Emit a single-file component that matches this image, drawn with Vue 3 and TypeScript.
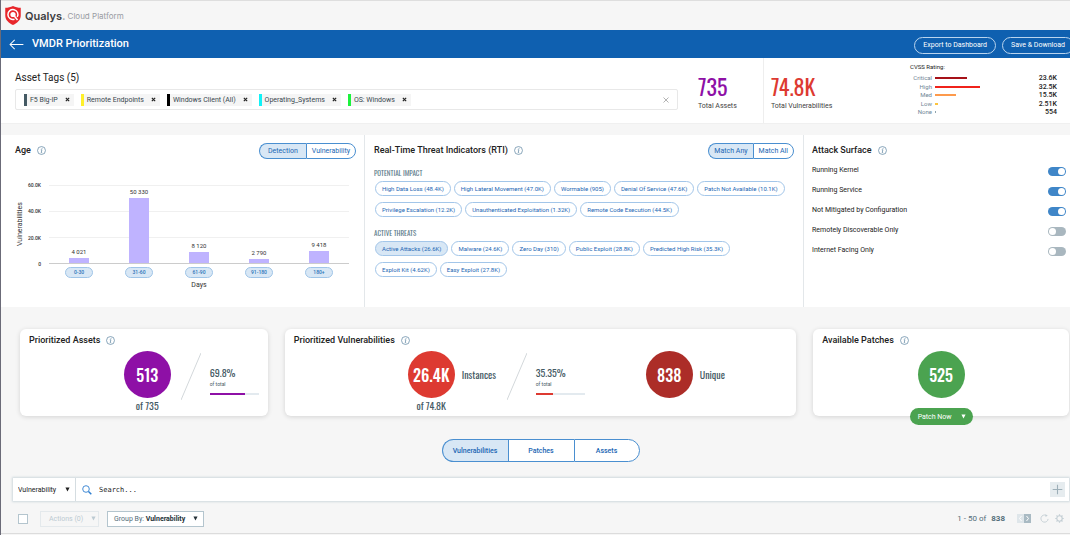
<script setup lang="ts">
import { ref } from 'vue'

interface Tag { name: string; color: string }
interface Rating { label: string; width: number; color: string; value: string }
interface AgeBucket { range: string; label: string; count: number }

const tags = ref<Tag[]>([
  { name: 'F5 Big-IP', color: '#455a64' },
  { name: 'Remote Endpoints', color: '#fff02a' },
  { name: 'Windows Client (All)', color: '#000000' },
  { name: 'Operating_Systems', color: '#12f2f7' },
  { name: 'OS: Windows', color: '#1cf23c' },
])

const ratings: Rating[] = [
  { label: 'Critical', width: 32, color: '#a61219', value: '23.6K' },
  { label: 'High', width: 45, color: '#f0231b', value: '32.5K' },
  { label: 'Med', width: 21, color: '#fd9a4c', value: '15.5K' },
  { label: 'Low', width: 3, color: '#fcc43e', value: '2.51K' },
  { label: 'None', width: 1, color: '#90a4ae', value: '554' },
]

const axisMax = 60000
const axisTicks = ['60.0K', '40.0K', '20.0K', '0']
const ages: AgeBucket[] = [
  { range: '0-30', label: '4 021', count: 4021 },
  { range: '31-60', label: '50 330', count: 50330 },
  { range: '61-90', label: '8 120', count: 8120 },
  { range: '91-180', label: '2 790', count: 2790 },
  { range: '180+', label: '9 418', count: 9418 },
]
const ageMode = ref('Detection')
const matchMode = ref('Match Any')

const impacts = [
  'High Data Loss (48.4K)', 'High Lateral Movement (47.0K)', 'Wormable (905)',
  'Denial Of Service (47.6K)', 'Patch Not Available (10.1K)', 'Privilege Escalation (12.2K)',
  'Unauthenticated Exploitation (1.32K)', 'Remote Code Execution (44.5K)',
]
const threats = [
  'Active Attacks (26.6K)', 'Malware (24.6K)', 'Zero Day (310)', 'Public Exploit (28.8K)',
  'Predicted High Risk (35.3K)', 'Exploit Kit (4.62K)', 'Easy Exploit (27.8K)',
]
const selected = ref<string[]>(['Active Attacks (26.6K)'])
function toggleChip(name: string) {
  selected.value = selected.value.includes(name)
    ? selected.value.filter((n) => n !== name)
    : [...selected.value, name]
}

const surfaces = ref([
  { name: 'Running Kernel', on: true },
  { name: 'Running Service', on: true },
  { name: 'Not Mitigated by Configuration', on: true },
  { name: 'Remotely Discoverable Only', on: false },
  { name: 'Internet Facing Only', on: false },
])

const tabs = ['Vulnerabilities', 'Patches', 'Assets']
const tab = ref('Vulnerabilities')
const query = ref('')
</script>

<template>
  <div class="page">
    <header class="brand">
      <svg class="shield" viewBox="0 0 32 38" aria-hidden="true">
        <path d="M16 0C11 2.500 6 3.600 0.500 3.600V19C0.500 28 7 33.500 16 38C25 33.500 31.500 28 31.500 19V3.600C26 3.600 21 2.500 16 0Z" fill="#e8262b" />
        <path d="M19 26.500A10 10 0 1 1 24.500 22" fill="none" stroke="#fff" stroke-width="3" />
        <circle cx="16" cy="17" r="5.200" fill="#fff" />
        <path d="M17 18L25 28" stroke="#fff" stroke-width="3" />
      </svg>
      <span class="logo">Qualys<i>.</i></span>
      <span class="product">Cloud Platform</span>
    </header>

    <div class="titlebar">
      <a href="#" class="back" aria-label="Back">
        <svg viewBox="0 0 16 12"><path d="M15.500 6H1M6 1L1 6L6 11" fill="none" stroke="currentColor" stroke-width="1.100" /></svg>
      </a>
      <h1>VMDR Prioritization</h1>
      <div class="title-actions">
        <button type="button">Export to Dashboard</button>
        <button type="button">Save &amp; Download</button>
      </div>
    </div>

    <section class="summary">
      <div class="tags">
        <h2>Asset Tags (5)</h2>
        <div class="tagbox">
          <span v-for="t in tags" :key="t.name" class="tag">
            <span class="swatch" :style="{ background: t.color }"></span>
            <span class="tagname">{{ t.name }}</span>
            <button type="button" :aria-label="'Remove ' + t.name">
              <svg viewBox="0 0 6 6"><path d="M1 1L5 5M5 1L1 5" stroke="#222" stroke-width="1.400" /></svg>
            </button>
          </span>
          <button type="button" class="clear" aria-label="Clear all">
            <svg viewBox="0 0 6 6"><path d="M0.500 0.500L5.500 5.500M5.500 0.500L0.500 5.500" stroke="#aaa" stroke-width="0.900" /></svg>
          </button>
        </div>
      </div>
      <div class="stat assets"><strong>735</strong><span>Total Assets</span></div>
      <div class="stat vulns"><strong>74.8K</strong><span>Total Vulnerabilities</span></div>
      <div class="cvss">
        <h3>CVSS Rating:</h3>
        <div class="ratings">
          <div v-for="r in ratings" :key="r.label" class="rating">
            <span class="rlabel">{{ r.label }}</span>
            <span class="rbar" :style="{ width: r.width + 'px', background: r.color }"></span>
            <span class="rvalue">{{ r.value }}</span>
          </div>
        </div>
      </div>
    </section>

    <div class="panels">
      <section class="panel">
        <div class="head">
          <h2>Age</h2>
          <svg class="info" viewBox="0 0 10 10"><circle cx="5" cy="5" r="4.400" /><path d="M5.700 2.100L5.500 3.100M4.200 4.200H5.400L4.700 7.400H5.700" /></svg>
          <div class="segmented">
            <button v-for="m in ['Detection', 'Vulnerability']" :key="m" type="button" :class="{ on: ageMode === m }" @click="ageMode = m">{{ m }}</button>
          </div>
        </div>
        <div class="chart">
          <div class="ytitle">Vulnerabilities</div>
          <div class="yaxis"><span v-for="t in axisTicks" :key="t">{{ t }}</span></div>
          <div class="plot">
            <div class="gridlines"><i></i><i></i><i></i></div>
            <div class="bars">
              <div v-for="a in ages" :key="a.range" class="col">
                <span>{{ a.label }}</span>
                <div class="bar" :style="{ height: (a.count / axisMax) * 100 + '%' }"></div>
              </div>
            </div>
          </div>
          <div class="xaxis">
            <div v-for="a in ages" :key="a.range"><button type="button">{{ a.range }}</button></div>
          </div>
          <div class="xtitle">Days</div>
        </div>
      </section>

      <section class="panel rti">
        <div class="head">
          <h2>Real-Time Threat Indicators (RTI)</h2>
          <svg class="info" viewBox="0 0 10 10"><circle cx="5" cy="5" r="4.400" /><path d="M5.700 2.100L5.500 3.100M4.200 4.200H5.400L4.700 7.400H5.700" /></svg>
          <div class="segmented">
            <button v-for="m in ['Match Any', 'Match All']" :key="m" type="button" :class="{ on: matchMode === m }" @click="matchMode = m">{{ m }}</button>
          </div>
        </div>
        <h4>POTENTIAL IMPACT</h4>
        <div class="chips">
          <button v-for="c in impacts" :key="c" type="button" :class="{ on: selected.includes(c) }" @click="toggleChip(c)">{{ c }}</button>
        </div>
        <h4>ACTIVE THREATS</h4>
        <div class="chips">
          <button v-for="c in threats" :key="c" type="button" :class="{ on: selected.includes(c) }" @click="toggleChip(c)">{{ c }}</button>
        </div>
      </section>

      <section class="panel attack">
        <div class="head">
          <h2>Attack Surface</h2>
          <svg class="info" viewBox="0 0 10 10"><circle cx="5" cy="5" r="4.400" /><path d="M5.700 2.100L5.500 3.100M4.200 4.200H5.400L4.700 7.400H5.700" /></svg>
        </div>
        <label v-for="s in surfaces" :key="s.name" class="switch">
          <span>{{ s.name }}</span>
          <input v-model="s.on" type="checkbox" />
        </label>
      </section>
    </div>

    <div class="cards">
      <section class="card">
        <div class="head">
          <h2>Prioritized Assets</h2>
          <svg class="info" viewBox="0 0 10 10"><circle cx="5" cy="5" r="4.400" /><path d="M5.700 2.100L5.500 3.100M4.200 4.200H5.400L4.700 7.400H5.700" /></svg>
        </div>
        <div class="figures end">
          <div class="total"><div class="disc purple">513</div><span>of 735</span></div>
          <svg class="slash" viewBox="0 0 20 47"><path d="M0 47L20 0" stroke="#d3d8db" /></svg>
          <div class="share">
            <strong>69.8%</strong><small>of total</small>
            <div class="track"><div class="fill purple" :style="{ width: '71%' }"></div></div>
          </div>
        </div>
      </section>

      <section class="card">
        <div class="head">
          <h2>Prioritized Vulnerabilities</h2>
          <svg class="info" viewBox="0 0 10 10"><circle cx="5" cy="5" r="4.400" /><path d="M5.700 2.100L5.500 3.100M4.200 4.200H5.400L4.700 7.400H5.700" /></svg>
        </div>
        <div class="figures wide">
          <div class="total"><div class="disc red">26.4K</div><span>of 74.8K</span></div>
          <span class="caption">Instances</span>
          <svg class="slash" viewBox="0 0 20 47"><path d="M0 47L20 0" stroke="#d3d8db" /></svg>
          <div class="share">
            <strong>35.35%</strong><small>of total</small>
            <div class="track"><div class="fill red" :style="{ width: '35%' }"></div></div>
          </div>
          <div class="disc crimson">838</div>
          <span class="caption">Unique</span>
        </div>
      </section>

      <section class="card patches">
        <div class="head">
          <h2>Available Patches</h2>
          <svg class="info" viewBox="0 0 10 10"><circle cx="5" cy="5" r="4.400" /><path d="M5.700 2.100L5.500 3.100M4.200 4.200H5.400L4.700 7.400H5.700" /></svg>
        </div>
        <div class="disc green">525</div>
        <button type="button" class="patch">Patch Now <svg class="caret" viewBox="0 0 6 6"><path d="M0.500 0.500H5.500L3 5.500Z" fill="currentColor" /></svg></button>
      </section>
    </div>

    <nav class="tabs">
      <button v-for="t in tabs" :key="t" type="button" :class="{ on: tab === t }" @click="tab = t">{{ t }}</button>
    </nav>

    <div class="search">
      <label class="scope">
        <select aria-label="Search scope"><option>Vulnerability</option><option>Asset</option></select>
        <svg class="caret" viewBox="0 0 6 6"><path d="M0.500 0.500H5.500L3 5.500Z" fill="currentColor" /></svg>
      </label>
      <svg class="lens" viewBox="0 0 10 10"><circle cx="4" cy="4" r="3.300" fill="none" stroke="#2f7fd0" stroke-width="0.900" /><path d="M6.500 6.500L9.300 9.300" stroke="#2f7fd0" stroke-width="1.500" /></svg>
      <input v-model="query" type="text" placeholder="Search..." aria-label="Search" />
      <button type="button" class="add" aria-label="Add filter">
        <svg viewBox="0 0 14 14"><path d="M7 2.500V11.500M2.500 7H11.500" stroke="#9dafb8" /></svg>
      </button>
    </div>

    <div class="toolbar">
      <input type="checkbox" aria-label="Select all" />
      <button type="button" class="actions" disabled>Actions (0) <svg class="caret" viewBox="0 0 6 6"><path d="M0.500 0.500H5.500L3 5.500Z" fill="currentColor" /></svg></button>
      <button type="button" class="group"><span>Group By: <b>Vulnerability</b></span> <svg class="caret" viewBox="0 0 6 6"><path d="M0.500 0.500H5.500L3 5.500Z" fill="currentColor" /></svg></button>
      <span class="count">1 - 50 of <b>838</b></span>
      <div class="pager">
        <button type="button" aria-label="Previous page"><svg viewBox="0 0 7 9"><path d="M4.500 2L2.500 4.500L4.500 7" fill="none" stroke="#fff" /></svg></button>
        <button type="button" aria-label="Next page"><svg viewBox="0 0 7 9"><path d="M2.500 2L4.500 4.500L2.500 7" fill="none" stroke="#fff" /></svg></button>
      </div>
      <button type="button" class="tool" aria-label="Refresh">
        <svg viewBox="0 0 10 10"><path d="M6.800 1.500A4 4 0 1 0 9 5.500" fill="none" stroke="#c3ced4" /><path d="M6 0.300L8.600 1.800L6.200 3.200Z" fill="#c3ced4" /></svg>
      </button>
      <button type="button" class="tool" aria-label="Settings">
        <svg viewBox="0 0 10 10"><circle cx="5" cy="5" r="3" fill="none" stroke="#c3ced4" stroke-width="1.200" /><path d="M5 0.300V2M5 8V9.700M0.300 5H2M8 5H9.700M1.700 1.700L2.900 2.900M7.100 7.100L8.300 8.300M1.700 8.300L2.900 7.100M7.100 2.900L8.300 1.700" stroke="#c3ced4" stroke-width="1.300" /></svg>
      </button>
    </div>
  </div>
</template>

<style>
body { margin: 0; background: #f6f6f6; }
</style>

<style scoped>
.page {
  --narrow: Oswald, "Roboto Condensed", "Liberation Sans Narrow", "Liberation Sans", sans-serif;
  border-left: 1px solid #6b6b78;
  background: #f6f6f6;
  color: #212121;
  font: 7px/10px Roboto, "Liberation Sans", sans-serif;
  min-height: 100vh;
  box-sizing: border-box;
  overflow: hidden;
}
.page *, .page *::before { box-sizing: border-box; }
h1, h2, h3, h4 { margin: 0; font-weight: 500; }
button { font: inherit; color: inherit; background: none; border: 0; padding: 0; cursor: pointer; white-space: nowrap; }
svg { display: block; }
.caret { width: 5px; height: 5px; }

.brand { display: flex; align-items: center; height: 30px; padding-left: 4px; border-top: 1px solid #dedede; }
.shield { width: 16px; height: 19px; }
.logo { margin-left: 4px; font: 600 11px/16px Inter, sans-serif; color: #3c3c40; }
.logo i { color: #aaa; font-style: normal; }
.product { margin-left: 2px; font: 8px/12px Inter, sans-serif; color: #999ca3; }

.titlebar { display: flex; align-items: center; height: 28px; padding-left: 8px; background: #0f60b0; color: #fff; }
.back { color: #fff; width: 15px; }
.back svg { width: 15px; height: 11px; }
h1 { margin-left: 8px; font-size: 11px; line-height: 14px; }
.title-actions { display: flex; gap: 6px; margin-left: auto; margin-right: -4px; padding-top: 2px; }
.title-actions button { height: 17px; padding: 0 8px; border: 1px solid #b9d4ee; border-radius: 9px; }

.summary { display: flex; height: 66px; background: #fff; padding-left: 14px; border-bottom: 1px solid #f0f0f0; }
.tags { flex: 1; padding-top: 13px; }
.tags h2 { font-size: 10px; line-height: 14px; font-weight: 400; margin-bottom: 4px; }
.tagbox { display: flex; align-items: center; gap: 7px; height: 21px; padding: 0 8px; border: 1px solid #e8e8e8; border-radius: 2px; }
.tag { display: flex; align-items: center; height: 12px; background: #f5f5f5; color: #37474f; }
.swatch { width: 3px; height: 12px; }
.tagname { padding: 0 3px; }
.tag button { width: 13px; height: 12px; display: grid; place-items: center; }
.tag svg { width: 5px; height: 5px; }
.clear { margin-left: auto; }
.clear svg { width: 6px; height: 6px; }
.stat { display: flex; flex-direction: column; padding-top: 12px; margin-left: 20px; width: 59px; }
.stat strong { font: 400 22px/32px var(--narrow); }
.stat span { font-size: 7px; line-height: 8px; white-space: nowrap; color: #424242; }
.assets strong { color: #8e10a6; }
.vulns { margin-left: 6px; width: 147px; padding-left: 7px; border-left: 1px solid #eee; }
.vulns strong { color: #dd3a31; }
.cvss { width: 160px; padding: 4px 13px 0 0; }
h3 { font-size: 6px; line-height: 10px; font-weight: 400; }
.ratings { display: flex; flex-direction: column; justify-content: space-between; height: 42px; margin-top: 2px; }
.rating { display: flex; align-items: center; height: 8px; }
.rlabel { width: 22px; text-align: right; font-size: 6px; color: #6f8595; }
.rbar { height: 2px; margin-left: 3px; }
.rvalue { margin-left: auto; font-weight: 500; }

.panels { display: grid; grid-template-columns: 364fr 439fr 266fr; margin-top: 11px; background: #fff; }
.panel { height: 172px; padding: 8px 9px 0 9px; border-right: 1px solid #e3e7ea; }
.panel:first-child { padding-left: 14px; padding-right: 8px; }
.panel:last-child { border-right: 0; padding-right: 4px; padding-left: 8px; }
.head { display: flex; align-items: center; height: 16px; flex: none; }
.head h2 { font-size: 9px; line-height: 12px; }
.panel .head h2, .panel .info { margin-bottom: 2px; }
.info { width: 9px; height: 9px; margin-left: 6px; fill: none; stroke: #5f86a1; stroke-width: 0.800; }
.segmented { display: flex; margin-left: auto; }
.segmented button { height: 16px; padding: 0 8px; border: 1px solid #4a8fd0; color: #1a66b3; background: #fff; font-size: 7px; }
.segmented button:first-child { border-radius: 8px 0 0 8px; border-right: 0; }
.segmented button:last-child { border-radius: 0 8px 8px 0; padding: 0 5px; }
.rti .segmented button { padding: 0 5px; }
.segmented .on { background: #d8e7f5; }

.chart { display: grid; grid-template-columns: 10px 16px 1fr; grid-template-rows: 79px 16px 10px; margin: 26px 7px 0 0; color: #333; }
.ytitle { writing-mode: vertical-rl; rotate: 180deg; font-size: 7px; line-height: 10px; text-align: center; }
.yaxis { display: flex; flex-direction: column; justify-content: space-between; margin: -4px 0; font-size: 5px; line-height: 8px; text-align: right; font-weight: 500; }
.plot { display: grid; margin-left: 8px; border-bottom: 1px solid #ccc; }
.gridlines, .bars { grid-area: 1 / 1; display: grid; }
.gridlines i { border-top: 1px solid #f0f0f0; }
.bars { grid-template-columns: repeat(5, 1fr); }
.col { display: flex; flex-direction: column; justify-content: flex-end; align-items: center; height: 78px; font-size: 6px; }
.col span { margin-bottom: 1px; }
.bar { width: 20px; background: #bfb3ff; flex: none; }
.xaxis { grid-column: 3; display: grid; grid-template-columns: repeat(5, 1fr); margin-left: 8px; padding-top: 3px; justify-items: center; }
.xaxis button { width: 28px; height: 11px; border: 1px solid #9fc5e8; border-radius: 6px; background: #d8e7f5; color: #2d74b8; font-size: 5px; line-height: 9px; font-weight: 500; }
.xtitle { grid-column: 3; margin-left: 8px; text-align: center; font-size: 7px; }

h4 { margin-top: 9px; font: 400 7px/10px var(--narrow); color: #607d8b; }
.chips + h4 { margin-top: 11px; }
.chips { display: flex; flex-wrap: wrap; gap: 6px 3px; margin: 3px 5px 0 1px; }
.chips button { height: 15px; padding: 0 6px; border: 1px solid #a3c6e9; border-radius: 8px; color: #1a66b3; font-size: 6px; }
.chips .on { background: #d8e7f5; }
.switch { display: flex; justify-content: space-between; height: 20px; align-items: center; }
.attack .head { margin-bottom: 1px; }
.switch input { appearance: none; width: 18px; height: 9px; margin: 3px 0 0; border-radius: 5px; background: #a9b7bf; padding: 1px; display: flex; }
.switch input::before { content: ""; width: 7px; height: 7px; border-radius: 50%; background: #fff; }
.switch input:checked { background: #3f86c8; justify-content: flex-end; }

.cards { display: grid; grid-template-columns: 248fr 512fr 256fr; gap: 17px; margin: 22px 1px 0 19px; }
.card { height: 87px; padding: 3px 9px 0; border-radius: 6px; background: #fff; box-shadow: 0 1px 5px rgba(0, 0, 0, 0.14); }
.figures { display: flex; align-items: flex-start; margin-top: 3px; color: #455a64; }
.end { justify-content: flex-end; }
.wide { padding-left: 114px; }
.total { width: 47px; text-align: center; }
.total span, .caption { font: 400 10px/15px var(--narrow); white-space: nowrap; }
.disc { width: 47px; height: 47px; border-radius: 50%; display: grid; place-items: center; color: #fff; font: 500 16px/22px var(--narrow); flex: none; }
.purple { background: #8e10a6; }
.red { background: #dd3a31; }
.crimson { background: #ac2d28; }
.green { background: #4ba350; }
.caption { width: 35px; margin: 16px 0 0 7px; }
.slash { width: 20px; height: 47px; margin: 2px 0 0 10px; }
.share { width: 49px; margin: 15px 0 0 9px; }
.wide .share { margin-right: 61px; }
.share strong { display: block; font: 400 10px/14px var(--narrow); }
.share small { display: block; font-size: 5px; line-height: 8px; }
.track { height: 2px; margin-top: 5px; background: #e3eaef; }
.fill { height: 2px; }
.patches { display: flex; flex-direction: column; align-items: center; }
.patches .head { align-self: stretch; margin-bottom: 3px; }
.patch { display: flex; align-items: center; gap: 9px; height: 17px; flex: none; margin-top: 10px; padding: 0 7px 0 8px; border-radius: 9px; background: #4ba350; color: #fff; }

.tabs { display: flex; justify-content: center; margin: 23px 0 0 10px; }
.tabs button { width: 66px; height: 23px; border: 1px solid #4a8fd0; border-right: 0; background: #fff; color: #1a66b3; font-weight: 500; }
.tabs button:first-child { border-radius: 12px 0 0 12px; }
.tabs button:last-child { border-radius: 0 12px 12px 0; border-right: 1px solid #4a8fd0; }
.tabs .on { background: #d8e7f5; }

.search { display: flex; align-items: center; height: 23px; margin: 16px 1px 0 12px; background: #fff; box-shadow: 0 0 2px 1px #cfd9de; }
.scope { display: flex; align-items: center; width: 63px; height: 23px; padding-left: 5px; border-right: 1px solid #d5dde1; }
.scope select { appearance: none; flex: 1; min-width: 0; border: 0; background: none; padding: 0; font: inherit; color: #222; }
.scope .caret { margin-right: 5px; }
.lens { width: 10px; height: 10px; margin-left: 6px; }
.search input { flex: 1; border: 0; padding: 0 0 0 7px; font: 7px/12px "DejaVu Sans Mono", monospace; outline: 0; }
.search input::placeholder { color: #222; opacity: 1; }
.add { width: 15px; height: 15px; margin-right: 4px; background: #e6ecef; }

.toolbar { display: flex; align-items: center; height: 33px; padding: 3px 6px 0 17px; border-bottom: 1px solid #dcdcdc; color: #546e7a; }
.toolbar input { appearance: none; width: 10px; height: 10px; margin: 0; border: 1px solid #b4c5ce; background: #fff; }
.actions, .group { display: flex; align-items: center; justify-content: space-between; height: 16px; border: 1px solid #e4e9ec; }
.actions { width: 59px; margin-left: 12px; padding: 0 2px 0 8px; color: #bccad2; }
.group { width: 97px; margin-left: 8px; padding: 0 5px 0 6px; border-color: #b4c5ce; background: #fff; }
.group b, .group svg { color: #263238; }
.count { margin-left: auto; font-size: 8px; }
.count b { margin-left: 3px; }
.pager { display: flex; margin-left: 12px; }
.pager button { width: 7px; height: 9px; background: #dfe6ea; }
.pager button + button { background: #a9bac3; }
.tool { width: 9px; height: 9px; margin-left: 9px; }
.tool + .tool { margin-left: 6px; }
</style>
